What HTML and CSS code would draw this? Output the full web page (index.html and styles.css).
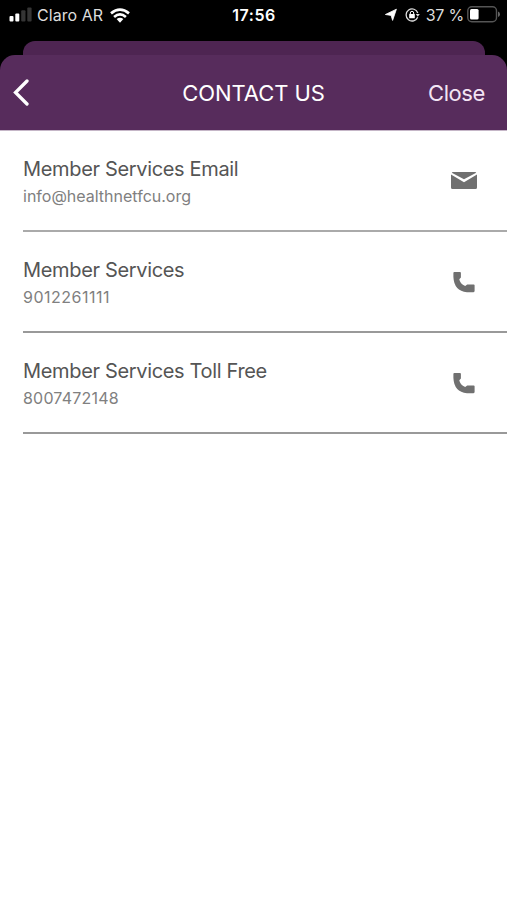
FILE: index.html
```html
<!DOCTYPE html>
<html lang="en">
<head>
<meta charset="utf-8">
<title>Contact Us</title>
<link rel="stylesheet" href="styles.css">
</head>
<body>
<div class="status">
  <div class="carrier">
    <svg class="signal" width="23" height="15" viewBox="0 0 23 15"><g fill="#fff"><rect x="0.5" y="9" width="4" height="5.5" rx="1"/><rect x="6.3" y="6.5" width="4" height="8" rx="1"/></g><g fill="#353535"><rect x="12.2" y="3.3" width="4.3" height="11.2" rx="1"/><rect x="18.3" y="0.5" width="4.3" height="14" rx="1"/></g></svg>
    <span class="name">Claro AR</span>
    <svg class="wifi" width="20" height="15" viewBox="0 0 20 15"><g fill="none" stroke="#fff" stroke-width="2.7"><path d="M1 5.4Q10 -2.2 19 5.4"/><path d="M4.1 8.9Q10 3.8 15.9 8.9"/></g><path fill="#fff" d="M6.6 11.1Q10 8.3 13.4 11.1L10 14.7z"/></svg>
  </div>
  <span class="time">17:56</span>
  <div class="power">
    <svg width="14" height="14" viewBox="0 0 14 14"><path fill="#fff" stroke="#fff" stroke-width=".8" stroke-linejoin="round" d="M12.4 1.2 8.6 12.4 7.1 7.4 1.4 6.5z"/></svg>
    <svg class="lock" width="15" height="14" viewBox="0 0 15 14"><path d="M12.7 9.2A6 6 0 1 1 12.8 5" fill="none" stroke="#ddd" stroke-width="1.3"/><path d="M10.8 6h4l-2 2.8z" fill="#ddd"/><rect x="4.2" y="6" width="5.6" height="4.2" rx=".5" fill="#fff"/><path d="M5.3 6.3V5a1.7 1.7 0 0 1 3.4 0v1.3" fill="none" stroke="#fff"/></svg>
    <span class="percent">37 %</span>
    <svg class="battery" width="33" height="17" viewBox="0 0 33 17"><rect x=".8" y=".8" width="28.7" height="15" rx="4" fill="none" stroke="#555" stroke-width="1.4"/><rect x="3" y="3" width="8.6" height="10.6" rx="1.5" fill="#fff"/><path d="M31 5.5q2 .8 2 2.8t-2 2.8z" fill="#666"/></svg>
  </div>
</div>
<div class="backcard"></div>
<header class="header">
  <svg class="back" width="16" height="27" viewBox="0 0 16 27"><path d="M14 2 2.5 13.5 14 25" fill="none" stroke="#fff" stroke-width="3.3" stroke-linecap="round"/></svg>
  <h1 class="title">CONTACT US</h1>
  <span class="close">Close</span>
</header>
<main class="list">
  <section class="row">
    <div class="text"><h2 class="label">Member Services Email</h2><p class="value">info@healthnetfcu.org</p></div>
    <svg class="icon" width="26" height="24" viewBox="0 0 26 24"><g fill="#707070"><path d="M2 3h22q1 0 1.2.8L13 10.2.8 3.8Q1 3 2 3z"/><path d="M0 5.6 13 13.2 26 5.6V18.5q0 1.5-1.5 1.5h-23Q0 20 0 18.5z"/></g></svg>
  </section>
  <section class="row">
    <div class="text"><h2 class="label">Member Services</h2><p class="value ones">9012261111</p></div>
    <svg class="icon" width="26" height="24" viewBox="0 0 26 24"><path fill="#707070" d="M3.3 2H9q.9 0 .9.9V7.6L8.3 9.2Q9 13.8 14.2 15.9L16.2 14.4H22.7q.9 0 .9.9v5.8q0 1.1-1.1 1.1H16Q3 21 2.4 7V2.9q0-.9.9-.9z"/></svg>
  </section>
  <section class="row">
    <div class="text"><h2 class="label">Member Services Toll Free</h2><p class="value digits">8007472148</p></div>
    <svg class="icon" width="26" height="24" viewBox="0 0 26 24"><path fill="#707070" d="M3.3 2H9q.9 0 .9.9V7.6L8.3 9.2Q9 13.8 14.2 15.9L16.2 14.4H22.7q.9 0 .9.9v5.8q0 1.1-1.1 1.1H16Q3 21 2.4 7V2.9q0-.9.9-.9z"/></svg>
  </section>
</main>
</body>
</html>
```
FILE: styles.css
```css
* { box-sizing: border-box; }
body { margin: 0; height: 900px; overflow: hidden; font-family: Inter, "Liberation Sans", sans-serif; background: linear-gradient(#000 0 100px, #fff 100px); }
svg { display: block; flex: none; }
h1, h2, p { margin: 0; font-weight: 400; }
.status { height: 41px; padding: 0 8px 11px 9px; display: grid; grid-template-columns: 1fr auto 1fr; align-items: center; color: #ddd; font-size: 16px; line-height: 20px; white-space: nowrap; }
.carrier, .power { display: flex; align-items: center; }
.signal { margin-top: -2px; }
.name { margin-left: 5px; letter-spacing: .05px; }
.wifi { margin-left: 7px; }
.time { color: #fff; font-weight: 600; letter-spacing: .5px; }
.power { justify-content: flex-end; }
.lock { margin-left: 7px; }
.percent { margin-left: 6px; letter-spacing: -.2px; }
.battery { margin-left: 3px; margin-top: -1px; margin-right: -1px; }
.backcard { height: 14px; margin: 0 22px 0 23px; border-radius: 12px 12px 0 0; background: #4e2552; }
.header { height: 75px; padding: 0 22px 0 13px; border-radius: 15px 15px 0 0; background: #572c5c; display: grid; grid-template-columns: 1fr auto 1fr; align-items: center; color: #fff; font-size: 22px; line-height: 28px; }
.title { padding-left: 9px; font-size: 22px; letter-spacing: -.05px; }
.close { justify-self: end; color: #f3e5f4; letter-spacing: -.4px; }
.list { border-top: 1px solid #c5b6c7; background: #fff; }
.row { height: 101px; margin-left: 23px; padding-right: 30px; border-bottom: 2px solid #999; display: flex; align-items: center; justify-content: space-between; }
.row:first-child { border-bottom-color: #aaa; }
.text { padding-top: 4px; }
.label { color: #555; font-size: 20px; line-height: 27px; letter-spacing: -.34px; }
.value { color: #808080; font-size: 16px; line-height: 26px; }
.ones { letter-spacing: .5px; }
.digits { letter-spacing: .2px; }
```
